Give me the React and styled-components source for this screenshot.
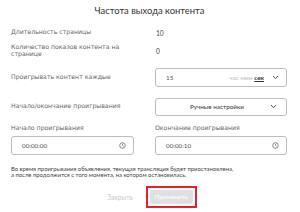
import styled, { createGlobalStyle } from "styled-components"

const Global = createGlobalStyle`
    html, body { margin: 0; padding: 0; background: #fff; }
    body { font-family: 'Lato', 'DejaVu Sans', sans-serif; color: #444; }
`

function Chevron(){
    return(
        <svg width="7" height="5" viewBox="0 0 7 5"><path d="M1 1 L3.5 3.6 L6 1" fill="none" stroke="#555" strokeWidth="1" /></svg>
    )
}

function Clock(){
    return(
        <svg width="7" height="7" viewBox="0 0 8 8">
            <circle cx="4" cy="4" r="3.2" fill="none" stroke="#666" strokeWidth="0.9" />
            <path d="M4 2.2 V4 L5.2 5" fill="none" stroke="#666" strokeWidth="0.8" />
        </svg>
    )
}

export default function App(){
    return(
        <>
            <Global />
            <Modal>
                <Title>Частота выхода контента</Title>
                <Row height={13}>
                    <Label>Длительность страницы</Label>
                    <Value>10</Value>
                </Row>
                <Row height={23}>
                    <Label>Количество показов контента на<br/>странице</Label>
                    <Value>0</Value>
                </Row>
                <Row height={30}>
                    <Label>Проигрывать контент каждые</Label>
                    <Field>
                        <span>15</span>
                        <Units>
                            <Unit>час</Unit>
                            <Unit>мин</Unit>
                            <Unit active>сек</Unit>
                            <Chevron />
                        </Units>
                    </Field>
                </Row>
                <Row height={29}>
                    <Label>Начало/окончание проигрывания</Label>
                    <Select>
                        <span>Ручные настройки</span>
                        <Chevron />
                    </Select>
                </Row>
                <TimeGrid>
                    <div>
                        <Label>Начало проигрывания</Label>
                        <Field narrow><span>00:00:00</span><Clock /></Field>
                    </div>
                    <div>
                        <Label>Окончание проигрывания</Label>
                        <Field><span>00:00:10</span><Clock /></Field>
                    </div>
                </TimeGrid>
                <Note>Во время проигрывания объявления, текущая трансляция будет приостановлена,<br/>а после продолжится с того момента, на котором остановилась.</Note>
                <Buttons>
                    <Close>Закрыть</Close>
                    <Focus><Apply>Применить</Apply></Focus>
                </Buttons>
            </Modal>
        </>
    )
}

const Modal = styled.div`
    width: 300px;
    height: 212px;
    box-sizing: border-box;
    padding: 0 13px 0 11px;
    display: flex;
    flex-direction: column;
`
const Title = styled.div`
    height: 20px;
    display: flex;
    align-items: center;
    justify-content: center;
    font-size: 9.4px;
    color: #333;
    padding-left: 1px;
    margin-bottom: 6px;
`
const Row = styled.div`
    display: flex;
    align-items: center;
    height: ${p => p.height}px;
`
const Label = styled.div`
    width: 144px;
    font-family: 'DejaVu Sans', sans-serif;
    font-size: 6.2px;
    line-height: 6.5px;
    color: #666;
`
const Value = styled.div`
    font-size: 6.6px;
    color: #444;
    padding-left: 1px;
`
const Field = styled.div`
    box-sizing: border-box;
    width: ${p => p.narrow ? '123px' : '132px'};
    height: 19px;
    border: 1px solid #bdbdbd;
    border-radius: 3px;
    display: flex;
    align-items: center;
    justify-content: space-between;
    padding: 0 7px 0 10px;
    font-size: 6.3px;
    color: #555;
`
const Units = styled.div`
    display: flex;
    align-items: center;
    gap: 2px;
    svg{ margin-left: 6px; }
`
const Unit = styled.span`
    color: ${p => p.active ? '#333' : '#bbb'};
    font-weight: ${p => p.active ? 700 : 400};
    text-decoration: ${p => p.active ? 'underline' : 'none'};
`
const Select = styled.div`
    box-sizing: border-box;
    width: 132px;
    height: 18px;
    border: 1px solid #bdbdbd;
    border-radius: 3px;
    display: flex;
    align-items: center;
    padding: 0 9px 0 34px;
    justify-content: space-between;
    font-size: 6.3px;
    color: #333;
`
const TimeGrid = styled.div`
    display: grid;
    grid-template-columns: 144px 132px;
    margin-top: 4px;
    ${Label}{ margin-bottom: 4px; }
`
const Note = styled.div`
    margin-top: 11px;
    font-size: 5.9px;
    line-height: 6px;
    color: #444;
`
const Buttons = styled.div`
    display: flex;
    justify-content: center;
    align-items: center;
    gap: 13px;
    margin-top: 8px;
    padding-left: 6px;
`
const Close = styled.div`
    font-size: 6.6px;
    color: #c6c6c6;
`
const Focus = styled.div`
    border: 2px solid #e8202a;
    padding: 2px;
`
const Apply = styled.div`
    width: 43px;
    height: 14px;
    background: #e0e0e0;
    border-radius: 2px;
    color: #fff;
    font-size: 6.3px;
    display: flex;
    align-items: center;
    justify-content: center;
`
